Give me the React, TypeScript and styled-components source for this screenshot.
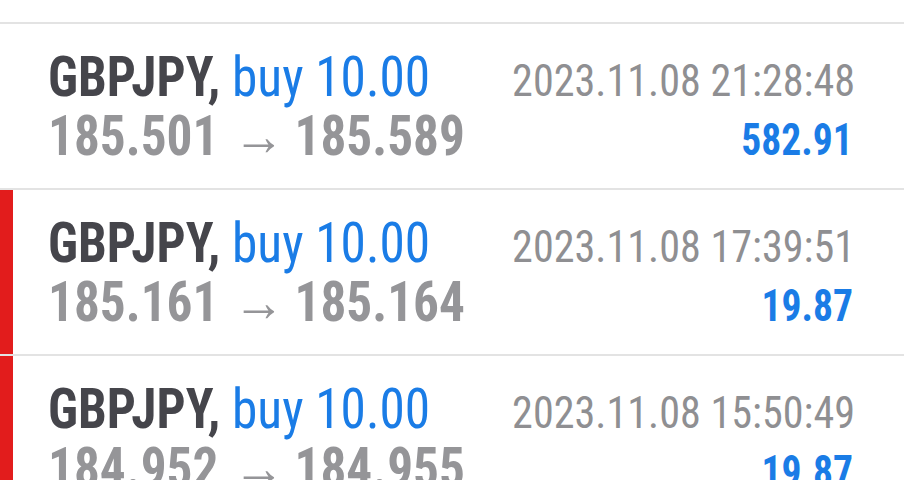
import React from "react";
import styled, { createGlobalStyle } from "styled-components";

const GlobalStyle = createGlobalStyle`
  html, body { margin: 0; padding: 0; background: #ffffff; }
  body { font-family: Roboto, "Noto Sans", sans-serif; }
`;

const Page = styled.div`
  width: 904px;
  height: 480px;
  overflow: hidden;
  background: #ffffff;
  padding-top: 22px;
  box-sizing: border-box;
`;

const List = styled.div`
  border-top: 2px solid #e3e3e3;
`;

const Row = styled.div`
  display: flex;
  height: 164px;
  border-bottom: 2px solid #e3e3e3;
`;

const Marker = styled.div<{ $loss?: boolean }>`
  width: 13px;
  flex: none;
  background: ${(p) => (p.$loss ? "#e21c1c" : "transparent")};
`;

const Body = styled.div`
  flex: 1;
  display: flex;
  align-items: baseline;
  padding: 24px 49px 0 35px;
  font-stretch: condensed;
  min-width: 0;
`;

const Left = styled.div`
  flex: 1 1 0;
  min-width: 0;
  display: flex;
  flex-direction: column;
  font-size: 56px;
  line-height: 59px;
  white-space: nowrap;
  transform: scaleX(0.916);
  transform-origin: left center;
`;

const Right = styled.div`
  flex: none;
  display: flex;
  flex-direction: column;
  align-items: flex-end;
  font-size: 45px;
  line-height: 59px;
  white-space: nowrap;
`;

const Symbol = styled.span`
  font-weight: 700;
  color: #45454b;
`;

const Deal = styled.span`
  color: #1a7ce6;
`;

const Prices = styled.div`
  font-weight: 700;
  color: #959598;
`;

const Arrow = styled.span`
  font-weight: 400;
  margin: 0 11px 0 16px;
`;

const Time = styled.div`
  color: #8f8f92;
  transform: scaleX(0.937);
  transform-origin: right center;
`;

const Profit = styled.div`
  font-weight: 700;
  color: #1a7ce6;
  margin-right: 2px;
  transform: scaleX(0.88);
  transform-origin: right center;
`;

const trades = [
  { open: "185.501", close: "185.589", time: "2023.11.08 21:28:48", profit: "582.91", loss: false },
  { open: "185.161", close: "185.164", time: "2023.11.08 17:39:51", profit: "19.87", loss: true },
  { open: "184.952", close: "184.955", time: "2023.11.08 15:50:49", profit: "19.87", loss: true },
];

export default function App() {
  return (
    <>
      <GlobalStyle />
      <Page>
        <List>
          {trades.map((t) => (
            <Row key={t.time}>
              <Marker $loss={t.loss} />
              <Body>
                <Left>
                  <div>
                    <Symbol>GBPJPY,</Symbol> <Deal>buy 10.00</Deal>
                  </div>
                  <Prices>
                    {t.open}
                    <Arrow>→</Arrow>
                    {t.close}
                  </Prices>
                </Left>
                <Right>
                  <Time>{t.time}</Time>
                  <Profit>{t.profit}</Profit>
                </Right>
              </Body>
            </Row>
          ))}
        </List>
      </Page>
    </>
  );
}
